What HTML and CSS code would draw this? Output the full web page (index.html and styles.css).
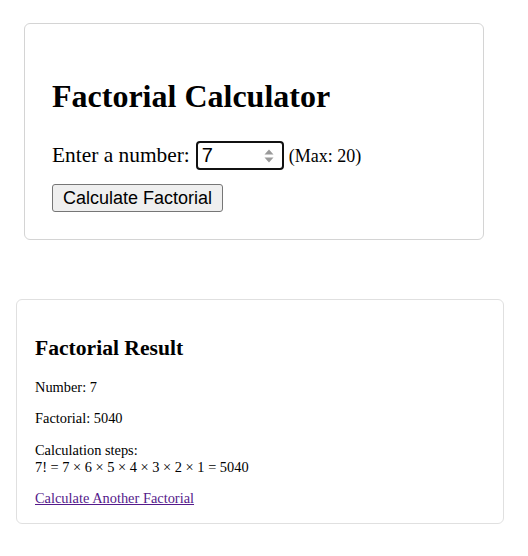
FILE: index.html
```html
<!DOCTYPE html>
<html>
<head>
<meta charset="utf-8">
<title>Factorial Calculator</title>
<link rel="stylesheet" href="styles.css">
</head>
<body>
<div class="calc-card">
  <h1 class="calc-title">Factorial Calculator</h1>
  <div class="calc-row">
    <label class="calc-label" for="num">Enter a number:</label>
    <span class="num-box">
      <input class="num-input" id="num" type="text" value="7">
      <svg class="spin" width="10" height="16" viewBox="0 0 10 16" aria-hidden="true">
        <path d="M5 1.5 L9.5 6.5 H0.5 Z" fill="#9a9a9a"/>
        <path d="M5 14.5 L9.5 9.5 H0.5 Z" fill="#9a9a9a"/>
      </svg>
    </span>
    <span class="calc-max">(Max: 20)</span>
  </div>
  <div class="calc-actions">
    <button class="calc-btn" type="button">Calculate Factorial</button>
  </div>
</div>

<div class="result-card">
  <h2 class="result-title">Factorial Result</h2>
  <p class="result-line">Number: 7</p>
  <p class="result-line">Factorial: 5040</p>
  <p class="result-line">Calculation steps:<br>7! = 7 × 6 × 5 × 4 × 3 × 2 × 1 = 5040</p>
  <div class="result-link-wrap"><a class="result-link" href="#">Calculate Another Factorial</a></div>
</div>
</body>
</html>
```

FILE: styles.css
```css
html, body {
  background: #ffffff;
}
body {
  margin: 8px;
  font-family: "Liberation Serif", "Times New Roman", serif;
  color: #000;
}

.calc-card {
  box-sizing: border-box;
  width: 460px;
  margin: 15px 0 0 16px;
  padding: 54px 27px 27px 27px;
  border: 1px solid #d4d4d4;
  border-radius: 6px;
}
.calc-title {
  margin: 0 0 27px 0;
  font-size: 32px;
  line-height: 36px;
  font-weight: bold;
}
.calc-row {
  display: flex;
  align-items: baseline;
  font-size: 21.4px;
}
.calc-label {
  margin-right: 6px;
}
.num-box {
  box-sizing: border-box;
  display: inline-flex;
  align-items: center;
  width: 88px;
  height: 29px;
  border: 2px solid #111;
  border-radius: 4px;
  padding: 0 8px 0 4px;
  background: #fff;
}
.num-input {
  flex: 1;
  min-width: 0;
  border: 0;
  outline: none;
  padding: 0;
  margin: 0;
  font-family: "Liberation Sans", Arial, sans-serif;
  font-size: 20px;
  line-height: 25px;
  color: #000;
  background: transparent;
}
.spin {
  flex: none;
  display: block;
}
.calc-max {
  margin-left: 5px;
  font-size: 18px;
}
.calc-actions {
  margin-top: 14px;
}
.calc-btn {
  font-family: "Liberation Sans", Arial, sans-serif;
  font-size: 18px;
  line-height: 20px;
  padding: 3px 10px;
  margin: 0;
  color: #000;
  background: #efefef;
  border: 1px solid #767676;
  border-radius: 3px;
}

.result-card {
  box-sizing: border-box;
  width: 488px;
  margin: 59px 0 0 8px;
  padding: 18px 18px 16px 18px;
  border: 1px solid #e0e0e0;
  border-radius: 6px;
  font-size: 14.4px;
}
.result-title {
  margin: 17.9px 0;
  font-size: 21.6px;
  font-weight: bold;
}
.result-line {
  margin: 14.4px 0;
}
.result-link-wrap {
  margin: 0;
}
.result-link {
  color: #551a8b;
  text-decoration: underline;
}
```
